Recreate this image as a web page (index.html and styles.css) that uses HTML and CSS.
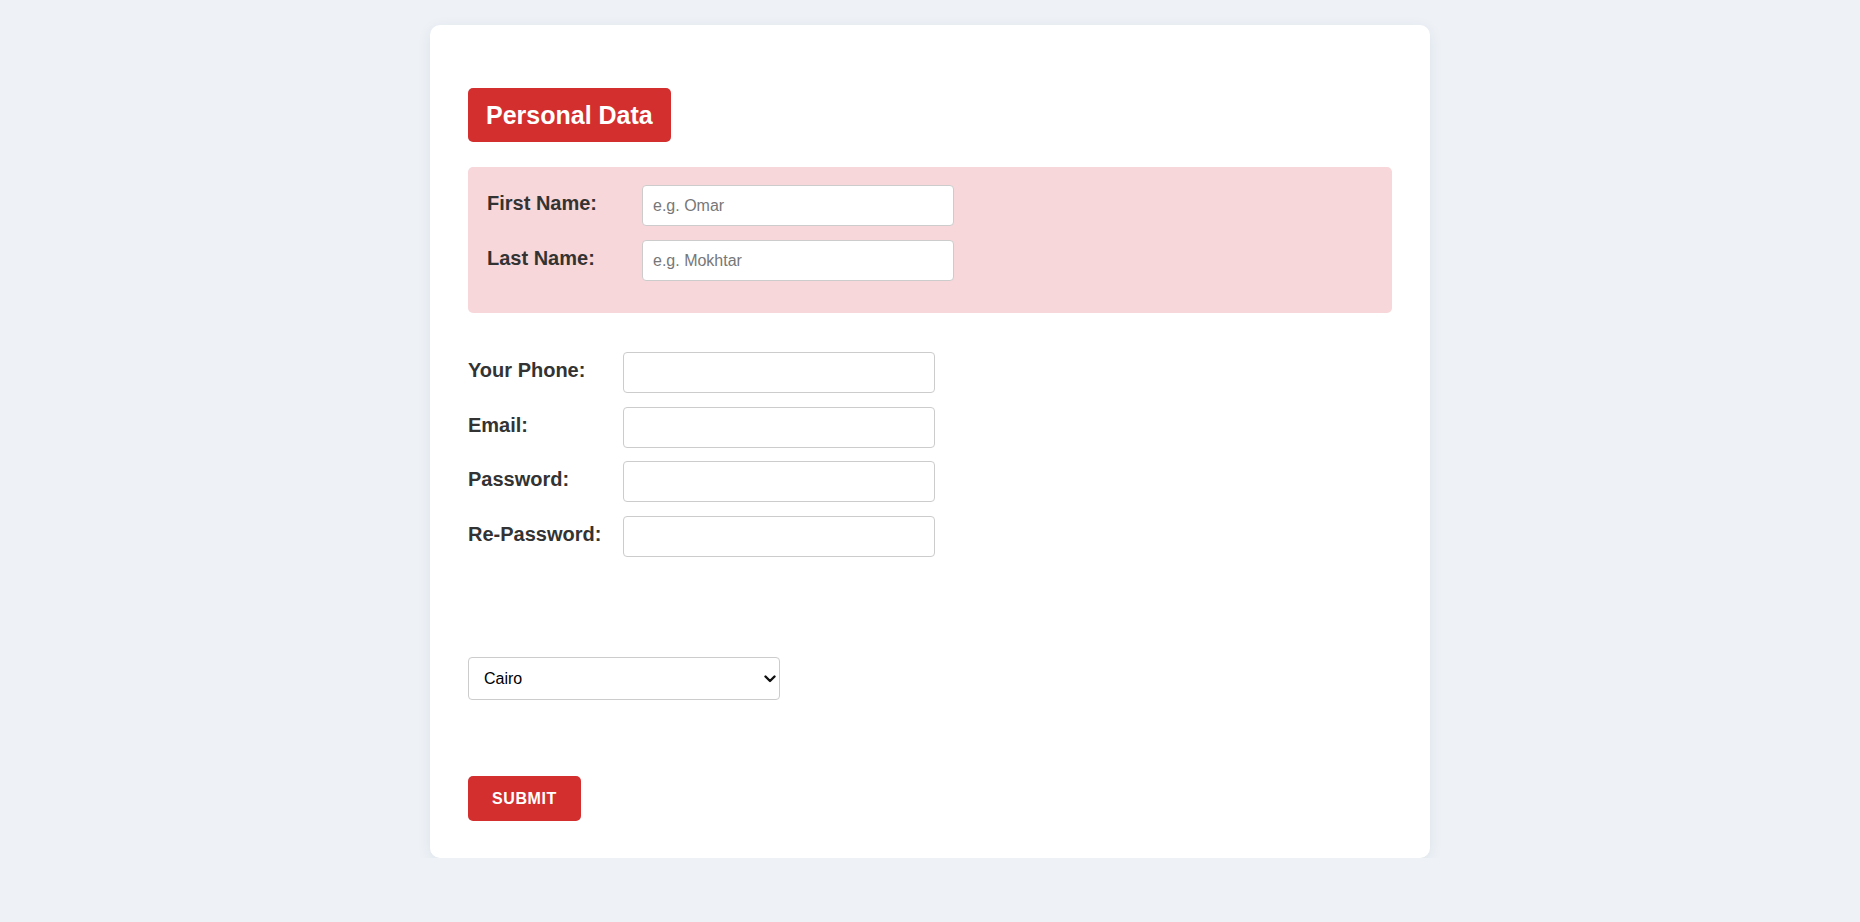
FILE: index.html
```html
<!DOCTYPE html>
<html lang="en">
<head>
<meta charset="utf-8">
<title>Personal Data</title>
<link rel="stylesheet" href="styles.css">
</head>
<body>
<main class="card">
  <form class="form">
    <h2 class="title">Personal Data</h2>
    <div class="name-box">
      <div class="row">
        <label class="label" for="fn">First Name:</label>
        <input class="input" id="fn" type="text" placeholder="e.g. Omar">
      </div>
      <div class="row">
        <label class="label" for="ln">Last Name:</label>
        <input class="input" id="ln" type="text" placeholder="e.g. Mokhtar">
      </div>
    </div>
    <div class="fields">
      <div class="row">
        <label class="label" for="ph">Your Phone:</label>
        <input class="input" id="ph" type="tel">
      </div>
      <div class="row">
        <label class="label" for="em">Email:</label>
        <input class="input" id="em" type="email">
      </div>
      <div class="row">
        <label class="label" for="pw">Password:</label>
        <input class="input" id="pw" type="password">
      </div>
      <div class="row">
        <label class="label" for="rpw">Re-Password:</label>
        <input class="input" id="rpw" type="password">
      </div>
    </div>
    <div class="select-wrap">
      <select class="city">
        <option>Cairo</option>
        <option>Alexandria</option>
        <option>Giza</option>
      </select>
      <svg class="chevron" width="12" height="8" viewBox="0 0 12 8" aria-hidden="true">
        <path d="M1.5 1.5 L6 6 L10.5 1.5" fill="none" stroke="#111" stroke-width="2.4" stroke-linecap="round" stroke-linejoin="round"/>
      </svg>
    </div>
    <button class="submit" type="button">SUBMIT</button>
  </form>
</main>
</body>
</html>
```
FILE: styles.css
```css
* {
  box-sizing: border-box;
}

body {
  margin: 0;
  background: #eef2f7;
  font-family: "Liberation Sans", Arial, sans-serif;
  color: #333;
}

.card {
  width: 1000px;
  margin: 25px auto 0;
  padding: 63px 38px 37px;
  background: #fff;
  border-radius: 10px;
  box-shadow: 0 3px 14px rgba(30, 50, 80, 0.08);
}

.form {
  display: flex;
  flex-direction: column;
  align-items: flex-start;
}

.title {
  margin: 0 0 25px;
  padding: 12px 18px;
  background: #d32f2f;
  color: #fff;
  font-size: 25px;
  line-height: 30px;
  font-weight: bold;
  border-radius: 5px;
}

.name-box {
  align-self: stretch;
  background: #f7d7da;
  border-radius: 5px;
  padding: 18px 19px 18px;
}

.fields {
  margin-top: 39px;
}

.row {
  display: flex;
  align-items: center;
  margin-bottom: 13.5px;
}

.name-box .row {
  margin-bottom: 14px;
}

.label {
  width: 155px;
  flex: none;
  font-size: 20px;
  font-weight: bold;
  color: #333;
  position: relative;
  top: -2px;
}

.input {
  width: 312px;
  height: 41px;
  padding: 0 10px;
  border: 1px solid #ccc;
  border-radius: 4px;
  background: #fff;
  font-family: "Liberation Sans", Arial, sans-serif;
  font-size: 16px;
  color: #333;
}

.input::placeholder {
  color: #777;
}

.select-wrap {
  position: relative;
  margin-top: 87px;
}

.city {
  display: block;
  width: 312px;
  height: 43px;
  padding: 0 24px 0 15px;
  border: 1px solid #ccc;
  border-radius: 4px;
  background: #fff;
  font-family: "Liberation Sans", Arial, sans-serif;
  font-size: 16px;
  color: #000;
  appearance: none;
  -webkit-appearance: none;
}

.chevron {
  position: absolute;
  right: 4px;
  top: 18px;
  pointer-events: none;
}

.submit {
  margin-top: 76px;
  width: 113px;
  height: 45px;
  padding: 0;
  border: none;
  border-radius: 5px;
  background: #d32f2f;
  color: #fff;
  font-family: "Liberation Sans", Arial, sans-serif;
  font-size: 16px;
  font-weight: bold;
  letter-spacing: 0.6px;
  cursor: pointer;
}
```
